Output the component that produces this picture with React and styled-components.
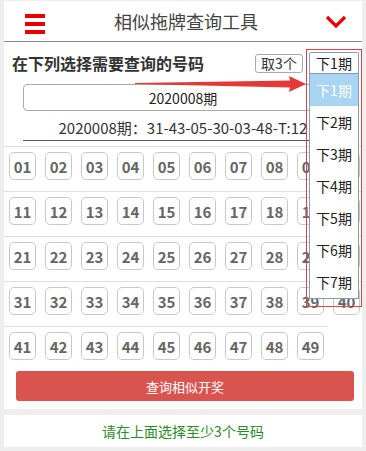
import styled, { createGlobalStyle } from "styled-components";

const GlobalStyle = createGlobalStyle`
  body {
    margin: 0;
    background: #eeeeee;
    font-family: "Noto Sans CJK SC", "Noto Sans", sans-serif;
  }
`;

const Page = styled.div`
  width: 366px;
  box-sizing: border-box;
  padding: 1px 4px 0;
`;

const Header = styled.header`
  height: 40px;
  background: #fff;
  border-bottom: 1px solid #8a8a8a;
  display: grid;
  grid-template-columns: 1fr auto 1fr;
  align-items: center;
  padding: 0 15px 0 21px;
`;

const Menu = styled.div`
  display: flex;
  flex-direction: column;
  gap: 4px;
  width: 20px;
  padding-top: 6px;
`;

const Bar = styled.span`
  display: block;
  height: 4px;
  background: #e60000;
`;

const Title = styled.h1`
  margin: 0;
  font-size: 18px;
  font-weight: normal;
  color: #444;
`;

const Chevron = styled.svg`
  justify-self: end;
  margin-top: 2px;
`;

const Card = styled.section`
  position: relative;
  background: #fff;
  padding-bottom: 8px;
`;

const TopRow = styled.div`
  display: flex;
  align-items: center;
  gap: 6px;
  padding: 10px 3px 0 8px;
`;

const Heading = styled.h2`
  flex: 1;
  margin: 0;
  font-size: 16px;
  line-height: 22px;
  font-weight: bold;
  color: #333;
`;

const PickButton = styled.button`
  width: 48px;
  height: 19px;
  padding: 0;
  border: 1px solid #aaa;
  border-radius: 3px;
  background: #fff;
  font-family: inherit;
  font-size: 14px;
  line-height: 17px;
  color: #333;
`;

const Select = styled.div`
  position: relative;
  width: 50px;
  height: 22px;
  box-sizing: border-box;
  border: 1px solid #7c9fd8;
  border-radius: 2px;
  font-size: 14px;
  line-height: 20px;
  text-align: center;
  color: #222;
`;

const OptionList = styled.ul`
  position: absolute;
  top: 100%;
  left: -1px;
  width: 50px;
  box-sizing: border-box;
  margin: 0;
  padding: 0;
  list-style: none;
  background: #fff;
  border: 1px solid #7f9db9;
  z-index: 5;
`;

const Option = styled.li`
  height: 32px;
  line-height: 32px;
  font-size: 14px;
  text-align: center;
  color: ${(p) => (p.$active ? "#fff" : "#222")};
  background: ${(p) => (p.$active ? "#a9d5f3" : "transparent")};
`;

const Marker = styled.div`
  position: absolute;
  left: -4px;
  top: -4px;
  width: 56px;
  height: 258px;
  box-sizing: border-box;
  border: 1px solid #d9443f;
  pointer-events: none;
  z-index: 6;
`;

const Arrow = styled.svg`
  position: absolute;
  left: 0;
  top: 0;
  pointer-events: none;
  z-index: 4;
`;

const PeriodBox = styled.div`
  margin: 10px 19px 0;
  height: 27px;
  box-sizing: border-box;
  border: 1px solid #aaa;
  border-radius: 4px;
  display: flex;
  align-items: center;
  justify-content: center;
  font-size: 14px;
  color: #222;
`;

const ResultLine = styled.div`
  margin: 7px 19px 0;
  padding-bottom: 2px;
  line-height: 20px;
  border-bottom: 1px solid #555;
  font-size: 15px;
  color: #333;
  text-align: center;
  white-space: nowrap;
  overflow: hidden;
`;

const NumberGrid = styled.div`
  margin-top: 5px;
`;

const Row = styled.div`
  display: flex;
  gap: 9px;
  width: fit-content;
  max-width: 100%;
  box-sizing: border-box;
  padding: 5px 4px 11px 5px;
  border-top: 1px solid #dedede;
`;

const Ball = styled.button`
  flex: none;
  width: 27px;
  height: 28px;
  box-sizing: border-box;
  padding: 0;
  border: 1px solid #c8c8c8;
  border-radius: 5px;
  background: #fff;
  color: #666;
  font-family: inherit;
  font-size: 15px;
  font-weight: bold;
  display: flex;
  align-items: center;
  justify-content: center;
`;

const QueryButton = styled.button`
  display: block;
  width: calc(100% - 20px);
  height: 30px;
  margin: 0 8px 0 12px;
  border: none;
  border-radius: 3px;
  background: #d9534f;
  color: #fff;
  font-family: inherit;
  font-size: 13px;
`;

const Notice = styled.div`
  margin-top: 6px;
  height: 32px;
  line-height: 32px;
  background: #fff;
  text-align: center;
  font-size: 14px;
  color: #2a8a2a;
`;

const rows = [0, 1, 2, 3, 4].map((r) =>
  Array.from({ length: r === 4 ? 9 : 10 }, (_, i) =>
    String(r * 10 + i + 1).padStart(2, "0")
  )
);

const periods = ["下1期", "下2期", "下3期", "下4期", "下5期", "下6期", "下7期"];

export default function App() {
  return (
    <Page>
      <GlobalStyle />
      <Header>
        <Menu>
          <Bar />
          <Bar />
          <Bar />
        </Menu>
        <Title>相似拖牌查询工具</Title>
        <Chevron width="22" height="14" viewBox="0 0 22 14">
          <path d="M2 2 L11 11 L20 2" fill="none" stroke="#e60000" strokeWidth="3.2" />
        </Chevron>
      </Header>
      <Card>
        <TopRow>
          <Heading>在下列选择需要查询的号码</Heading>
          <PickButton>取3个</PickButton>
          <Select>
            下1期
            <OptionList>
              {periods.map((p, i) => (
                <Option key={p} $active={i === 0}>
                  {p}
                </Option>
              ))}
            </OptionList>
            <Marker />
          </Select>
        </TopRow>
        <PeriodBox>2020008期</PeriodBox>
        <ResultLine>2020008期：31-43-05-30-03-48-T:12</ResultLine>
        <NumberGrid>
          {rows.map((row, i) => (
            <Row key={i}>
              {row.map((n) => (
                <Ball key={n}>{n}</Ball>
              ))}
            </Row>
          ))}
        </NumberGrid>
        <QueryButton>查询相似开奖</QueryButton>
        <Arrow width="358" height="70" viewBox="4 42 358 70">
          <polygon
            points="135,83 290,80.5 289,76 306,84 289,92 290,87.5 135,84"
            fill="#e53935"
          />
        </Arrow>
      </Card>
      <Notice>请在上面选择至少3个号码</Notice>
    </Page>
  );
}
